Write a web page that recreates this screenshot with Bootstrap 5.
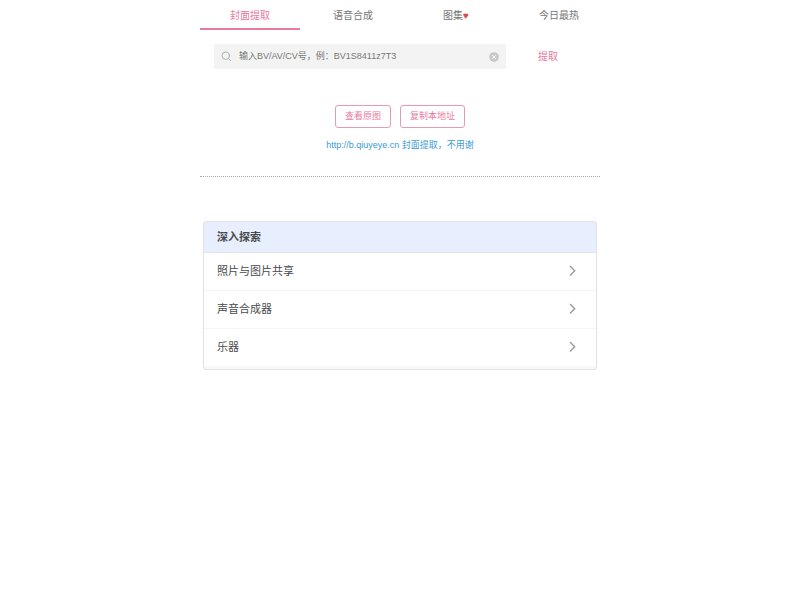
<!DOCTYPE html>
<html lang="zh-CN">
<head>
<meta charset="utf-8">
<meta name="viewport" content="width=device-width, initial-scale=1">
<title>封面提取</title>
<link href="https://cdn.jsdelivr.net/npm/bootstrap@5.3.0/dist/css/bootstrap.min.css" rel="stylesheet">
<style>
  body { font-family: "Liberation Sans", "Noto Sans CJK SC", sans-serif; font-size: 9px; line-height: 13px; color: #666; }
  .page-column { max-width: 400px; }
  .tabs { gap: 3px; }
  .tab-link { font-size: 10px; line-height: 16px; padding: 8px 0 4px; color: #757575; border-bottom: 2px solid transparent; }
  .tab-link.active { color: #e67a9f; border-color: #e67a9f; }
  .heart { color: #dc4a41; }
  .search-row { padding: 14px 14px 0; }
  .search-box { height: 25px; background: #f3f3f3; border-radius: 2px; padding: 0 7px; }
  .search-box input { font-family: "Liberation Sans", "Noto Sans CJK TC", sans-serif; font-size: 9px; line-height: 13px; color: #666; outline: 0; padding: 0 7px; min-width: 0; }
  .search-box input::placeholder { color: #777; opacity: 1; }
  .extract { width: 80px; font-size: 10px; line-height: 16px; color: #e67a9f; border: 0; padding: 0 0 0 4px; }
  .actions { gap: 9px; padding-top: 36px; }
  .action-btn { font-size: 9px; line-height: 13px; padding: 4px 9px; border: 1px solid #e79ab5; border-radius: 3px; color: #e67a9f; }
  .action-btn:hover { color: #fff; background: #e67a9f; }
  .source { padding: 11px 0 24px; border-bottom: 1px dotted #aaa; }
  .source a { font-family: "Liberation Sans", "Noto Sans CJK TC", sans-serif; color: #3a9bd1; }
  .explore { margin: 44px 3px 0; border: 1px solid #dfe3e8; border-radius: 3px; padding-bottom: 3px; background: #f7f8fa; color: #484a4c; font-size: 11px; }
  .explore h2 { font-size: 11px; line-height: 16px; padding: 7px 13px; background: #e7eefd; border-bottom: 1px solid #dfe3e8; }
  .explore-item { font-size: 11px; line-height: 16px; padding: 10px 20px 11px 13px; background: #fff; color: #484a4c; }
  .explore-item + .explore-item { border-top: 1px solid #f4f5f6; }
</style>
<script src="https://cdn.jsdelivr.net/npm/bootstrap@5.3.0/dist/js/bootstrap.bundle.min.js"></script>
</head>
<body class="bg-white">
<main class="page-column mx-auto">
  <nav class="tabs d-flex flex-nowrap text-center" aria-label="功能">
    <a class="tab-link active col-3 text-decoration-none" href="#" aria-current="page">封面提取</a>
    <a class="tab-link col-3 text-decoration-none" href="#">语音合成</a>
    <a class="tab-link col-3 text-decoration-none" href="#">图集<span class="heart">♥</span></a>
    <a class="tab-link col-3 text-decoration-none" href="#">今日最热</a>
  </nav>

  <form class="search-row d-flex align-items-center">
    <div class="search-box d-flex align-items-center flex-grow-1">
      <svg width="11" height="11" viewBox="0 0 11 11" fill="none" stroke="#b0b0b0" stroke-width="1" stroke-linecap="round" aria-hidden="true"><circle cx="4.7" cy="4.7" r="3.7"/><path d="M7.5 7.5 9.8 9.8"/></svg>
      <input class="border-0 bg-transparent flex-grow-1" type="text" aria-label="视频编号" placeholder="输入BV/AV/CV号，例：BV1S8411z7T3">
      <button class="border-0 bg-transparent p-0 d-flex" type="reset" aria-label="清除">
        <svg width="10" height="10" viewBox="0 0 10 10" aria-hidden="true"><circle cx="5" cy="5" r="4.8" fill="#c8c8c8"/><path d="m3.4 3.4 3.2 3.2m0-3.2L3.4 6.6" stroke="#fff" stroke-width=".9" stroke-linecap="round"/></svg>
      </button>
    </div>
    <button class="extract bg-transparent" type="button">提取</button>
  </form>

  <div class="actions d-flex justify-content-center">
    <button class="btn action-btn" type="button">查看原图</button>
    <button class="btn action-btn" type="button">复制本地址</button>
  </div>
  <div class="source text-center"><a class="text-decoration-none" href="#">http://b.qiuyeye.cn 封面提取，不用谢</a></div>

  <section class="explore overflow-hidden">
    <h2 class="fw-bold mb-0">深入探索</h2>
    <a class="explore-item d-flex align-items-center justify-content-between text-decoration-none" href="#">照片与图片共享
      <svg width="7" height="12" viewBox="0 0 7 12" fill="none" stroke="#999b9e" stroke-width="1.4" aria-hidden="true"><path d="m1 1 4.7 4.7L1 10.4"/></svg></a>
    <a class="explore-item d-flex align-items-center justify-content-between text-decoration-none" href="#">声音合成器
      <svg width="7" height="12" viewBox="0 0 7 12" fill="none" stroke="#999b9e" stroke-width="1.4" aria-hidden="true"><path d="m1 1 4.7 4.7L1 10.4"/></svg></a>
    <a class="explore-item d-flex align-items-center justify-content-between text-decoration-none" href="#">乐器
      <svg width="7" height="12" viewBox="0 0 7 12" fill="none" stroke="#999b9e" stroke-width="1.4" aria-hidden="true"><path d="m1 1 4.7 4.7L1 10.4"/></svg></a>
  </section>
</main>
</body>
</html>
